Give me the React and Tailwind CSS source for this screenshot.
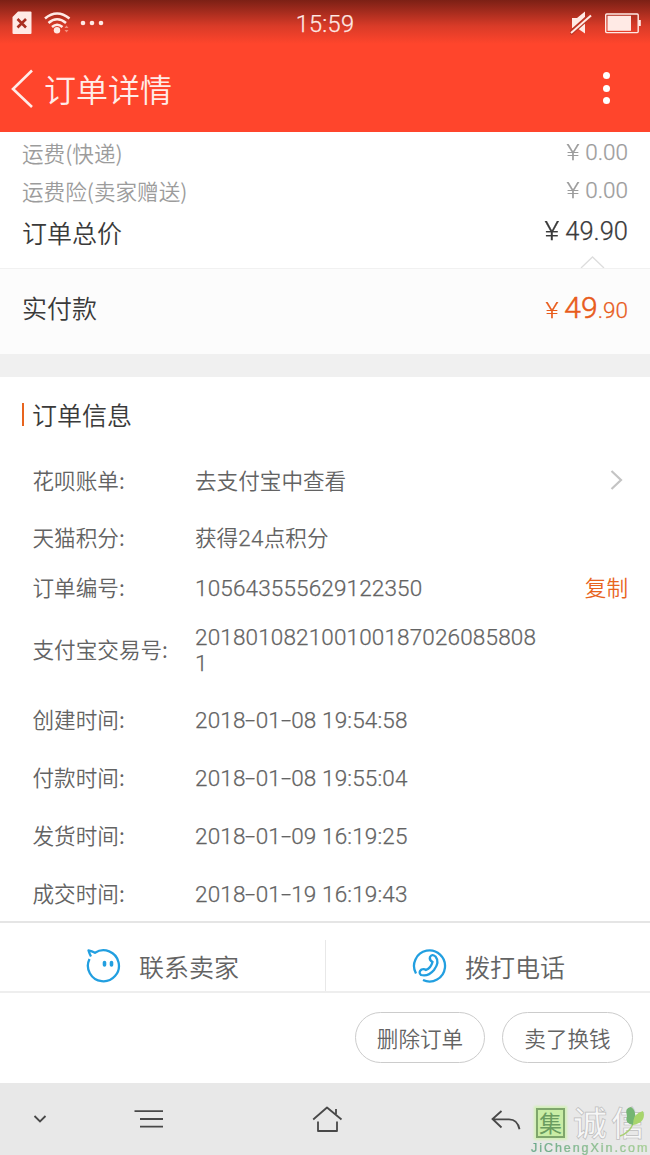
import React from 'react';

// Light digits look closer to the phone's system face than the CJK font's own
const num = "font-[Roboto,'Noto_Sans_CJK_SC',sans-serif]";

const fees = [
  { label: '运费(快递)', price: '0.00' },
  { label: '运费险(卖家赠送)', price: '0.00' },
];

const times = [
  { label: '创建时间:', value: '2018-01-08 19:54:58' },
  { label: '付款时间:', value: '2018-01-08 19:55:04' },
  { label: '发货时间:', value: '2018-01-09 16:19:25' },
  { label: '成交时间:', value: '2018-01-19 16:19:43' },
];

function StatusBar() {
  return (
    <div className="flex h-[46px] items-center justify-between pl-3 pr-2 text-[#ffeae5]">
      <div className="flex w-[200px] items-center">
        <svg className="h-[24px] w-[20px]" viewBox="0 0 20 24">
          <path d="M6 0.5H18.5Q19.5 0.5 19.5 1.5V22Q19.5 23 18.5 23H1.5Q0.5 23 0.5 22V6Z" fill="currentColor" />
          <path d="M5.5 8l8.5 8.5M14 8l-8.5 8.5" stroke="#a92f20" strokeWidth="2.6" />
        </svg>
        <svg className="ml-3 h-[22px] w-[27px]" viewBox="0 0 27 22" fill="none" stroke="currentColor" strokeWidth="2.6">
          <path d="M1 6.5Q13 -3.5 25.5 6.5" />
          <path d="M4.5 11Q13 3.5 22 11" />
          <path d="M8 15Q13 10.5 18.5 15" />
          <circle cx="13" cy="18.3" r="3.2" fill="currentColor" stroke="none" />
          <path d="M20.5 16l2-2.5 2 2.5zM20.5 18l2 2.5 2-2.5z" fill="#f3907d" stroke="none" />
        </svg>
        <svg className="ml-[9px] h-[6px] w-[26px]" viewBox="0 0 26 6" fill="currentColor">
          <circle cx="3" cy="3" r="2.3" />
          <circle cx="12" cy="3" r="2.3" />
          <circle cx="21" cy="3" r="2.3" />
        </svg>
      </div>
      <span className={`${num} mr-[4px] pt-[3px] text-[23.5px] leading-none tracking-[0.3px] [-webkit-text-stroke:0.25px_currentColor]`}>15:59</span>
      <div className="flex w-[200px] items-center justify-end">
        <svg className="h-[24px] w-[22px]" viewBox="0 0 22 24">
          <path d="M2 7h5l8-6.5v22L7 17H2z" fill="currentColor" />
          <path d="M0 22.5L21 4" stroke="#bf3524" strokeWidth="5" />
          <path d="M1 22L21 4.5" stroke="currentColor" strokeWidth="2" />
        </svg>
        <svg className="ml-[13px] mr-px h-[21px] w-[36px]" viewBox="0 0 36 21">
          <rect x="0.7" y="1" width="32.5" height="18.6" rx="1" fill="none" stroke="currentColor" strokeWidth="1.4" />
          <rect x="2.5" y="2.8" width="23.5" height="15" fill="currentColor" />
          <rect x="33.5" y="7" width="2.3" height="6" fill="currentColor" />
        </svg>
      </div>
    </div>
  );
}

function Yen() {
  return <span className="inline-block origin-right scale-x-[1.12]">¥</span>;
}

// Date with the wide hyphens of the system face
function DateTime({ value }) {
  const parts = value.split('-');
  return (
    <span className={`${num} text-[22.5px] tracking-[0.15px] [-webkit-text-stroke:0.25px_currentColor]`}>
      {parts.map((part, i) => (
        <React.Fragment key={i}>
          {i > 0 && <span className="mx-[1.8px] inline-block scale-x-[1.6]">-</span>}
          {part}
        </React.Fragment>
      ))}
    </span>
  );
}

function InfoRow({ label, className, children }) {
  return (
    <div className={`flex items-center pl-[32.5px] pr-[22px] ${className}`}>
      <span className="w-[162.5px] shrink-0 whitespace-nowrap pb-[2px]">{label}</span>
      {children}
    </div>
  );
}

function NavBar() {
  return (
    <div className="relative h-[72px] shrink-0 bg-[#e8e8e8]">
      <svg className="h-[72px] w-[650px]" viewBox="0 0 650 72" fill="none" stroke="#484848" strokeWidth="1.8">
        <path d="M34.5 33l5.5 5.5 5.5-5.5" />
        <path d="M134.5 28.2H163M140 36H163M140 43.7H163" />
        <path d="M313.2 36.5L327 24.500l14.500 12M336 31v-5M318 38.500v9.500h19v-9.500" strokeLinejoin="round" />
        <path d="M501.5 28l-9 8 9 8.5M493 36.3h16q8.500 0 10.500 10" />
      </svg>
      {/* Site mark */}
      <div className="absolute left-[531px] top-[22px] w-[119px]">
        <div className="flex h-[36px] items-center">
          <span className="ml-[5px] flex h-[30px] w-[29px] shrink-0 items-center justify-center border-2 border-[#7fa66c] bg-[#c9eda5] pb-px text-[23px] font-normal leading-none text-[#6b9c60] shadow-[0_0_2px_2px_#d3efb8]">集</span>
          <span className="ml-[8px] whitespace-nowrap pb-[3px] text-[34px] font-medium leading-[33px] tracking-[4px] text-[#f7f7f7] [-webkit-text-stroke:0.7px_#bdbdbd]">诚信</span>
        </div>
        <div className="whitespace-nowrap bg-gradient-to-r from-[#65a58a] to-[#abd392] bg-clip-text font-['Liberation_Sans',sans-serif] text-[12.5px] font-normal leading-[14px] tracking-[1.950px] text-transparent [-webkit-text-stroke:0.2px_#8fbf96]">JiChengXin.com</div>
        <svg className="absolute left-[88px] top-0 h-[34px] w-[31px]" viewBox="0 0 31 34">
          <path d="M1 31Q10 28 14 19" fill="none" stroke="#a8cf72" strokeWidth="1.500" />
          <path d="M14 20Q5 18 8 11Q5 3 12 2Q19 6 14 20Z" fill="#74b573" />
          <path d="M14 20Q14 8 24 6Q28 17 14 20Z" fill="#a7d56c" />
        </svg>
      </div>
    </div>
  );
}

export default function App() {
  return (
    <div className="flex h-[1155px] w-[650px] flex-col overflow-hidden bg-white font-['Noto_Sans_CJK_SC',sans-serif] text-[21.6px] font-[350] leading-[26px] text-[#636363]">
      <header className="h-[132px] shrink-0 bg-[linear-gradient(180deg,#7c2015_0px,#a62c1e_12px,#d93b28_26px,#ff452c_44px)] text-[#ffece8]">
        <StatusBar />
        <div className="flex h-[86px] items-center pl-[11px] pr-[40px]">
          <svg className="h-[40px] w-[23px]" viewBox="0 0 23 40" fill="none" stroke="currentColor" strokeWidth="2.6">
            <path d="M21 1.500L2 20 21 38" />
          </svg>
          <h1 className="ml-[10px] flex-1 pb-[2px] text-[32px] leading-[40px]">订单详情</h1>
          <div className="flex flex-col gap-[5.5px] pb-[2px]">
            <i className="size-[7px] rounded-full bg-white" />
            <i className="size-[7px] rounded-full bg-white" />
            <i className="size-[7px] rounded-full bg-white" />
          </div>
        </div>
      </header>

      {/* Price summary */}
      <section className="relative h-[136px] shrink-0 px-[22px] pt-[2px]">
        {fees.map((fee) => (
          <div key={fee.label} className="flex h-[38px] items-center justify-between text-[#9c9c9c]">
            <span>{fee.label}</span>
            <span className={`${num} pb-[2px] text-[22.5px] [-webkit-text-stroke:0.25px_currentColor]`}><Yen /> {fee.price}</span>
          </div>
        ))}
        <div className="flex h-[43px] items-center justify-between text-[25px] text-[#3a3a3a]">
          <span>订单总价</span>
          <span className={`${num} pb-px text-[25.5px] [-webkit-text-stroke:0.25px_currentColor]`}><Yen /> 49.90</span>
        </div>
        <svg className="absolute bottom-0 right-[45px] h-[12px] w-[25px]" viewBox="0 0 25 12" fill="none" stroke="#ddd" strokeWidth="1.300">
          <path d="M1 12L12.500 1 24 12" />
        </svg>
      </section>
      <section className="flex h-[86px] shrink-0 items-center justify-between border-t border-[#f1f1f1] bg-[#fcfcfc] px-[22px] pb-[6px] text-[25px] text-[#3a3a3a]">
        <span className="pb-[3px]">实付款</span>
        <span className={`${num} text-[22.5px] text-[#e85c1c] [-webkit-text-stroke:0.25px_currentColor]`}><Yen /> <span className="text-[30px] [-webkit-text-stroke:0.5px_currentColor]">49</span>.90</span>
      </section>
      <div className="h-[23px] shrink-0 bg-[#f0f0f0]" />

      {/* Order info */}
      <section className="h-[544px] shrink-0">
        <div className="flex h-[75px] items-center pl-[22px] text-[25px] text-[#3a3a3a]">
          <i className="mr-[8px] h-[23px] w-[2px] bg-[#e8641e]" />
          <h2 className="pb-[2px]">订单信息</h2>
        </div>
        <InfoRow label="花呗账单:" className="h-[57px]">
          <span className="flex-1 pb-[2px]">去支付宝中查看</span>
          <svg className="mb-[2px] mr-[5px] h-[20px] w-[13px]" viewBox="0 0 13 20" fill="none" stroke="#c4c4c4" strokeWidth="2.200">
            <path d="M1.500 1L11 10 1.500 19" />
          </svg>
        </InfoRow>
        <InfoRow label="天猫积分:" className="h-[58px]">
          <span className="pb-[2px]">获得<span className={`${num} text-[22.5px] tracking-[0.3px] [-webkit-text-stroke:0.25px_currentColor]`}>24</span>点积分</span>
        </InfoRow>
        <InfoRow label="订单编号:" className="h-[42px]">
          <span className={`${num} flex-1 text-[22.5px] tracking-[0.15px] [-webkit-text-stroke:0.25px_currentColor]`}>105643555629122350</span>
          <button className="pb-[2px] text-[#e8641e]">复制</button>
        </InfoRow>
        <InfoRow label="支付宝交易号:" className="h-[82px]">
          <span className={`${num} w-[348px] break-all text-[22.5px] tracking-[0.15px] [-webkit-text-stroke:0.25px_currentColor]`}>2018010821001001870260858081</span>
        </InfoRow>
        {times.map((t) => (
          <InfoRow key={t.label} label={t.label} className="h-[58px]">
            <DateTime value={t.value} />
          </InfoRow>
        ))}
      </section>

      {/* Contact bar */}
      <div className="flex h-[72px] shrink-0 border-b-2 border-t-2 border-b-[#eee] border-t-[#e5e5e5] pt-[17px] text-[25px]">
        <button className="flex w-[325px] items-center pl-[86px]">
          <svg className="h-[36px] w-[36px]" viewBox="0 0 36 36" fill="none" stroke="#229fe0" strokeWidth="2.300">
            <path d="M3.500 11A15.500 15.500 0 1 0 9 4.800Q6 3 2.500 2.500Q3.500 6 5 8.500" strokeLinejoin="round" />
            <path d="M18.500 14.500v2.500M25.500 14.500v2.500" strokeWidth="3.600" strokeLinecap="round" />
          </svg>
          <span className="ml-[17px]">联系卖家</span>
        </button>
        <button className="flex flex-1 items-center border-l border-[#e8e8e8] pl-[86px]">
          <svg className="h-[36px] w-[36px]" viewBox="0 0 36 36" fill="none" stroke="#229fe0" strokeWidth="2.300">
            <path d="M4 25.500A15.500 15.500 0 1 1 11 32" />
            <path d="M18 9Q20 5.500 23.500 8.500Q28 14 22 22Q16 29 9 27Q6 24 9.500 21.500Q12 20.500 14 22Q19 20 20.500 14Q17 12 18 9Z" />
          </svg>
          <span className="ml-[17px]">拨打电话</span>
        </button>
      </div>

      <div className="flex h-[90px] shrink-0 items-center justify-end gap-[17px] pb-px pr-[17px]">
        <button className="h-[51px] w-[130px] rounded-full border border-[#ccc]">删除订单</button>
        <button className="h-[51px] w-[131px] rounded-full border border-[#ccc]">卖了换钱</button>
      </div>
      <NavBar />
    </div>
  );
}
